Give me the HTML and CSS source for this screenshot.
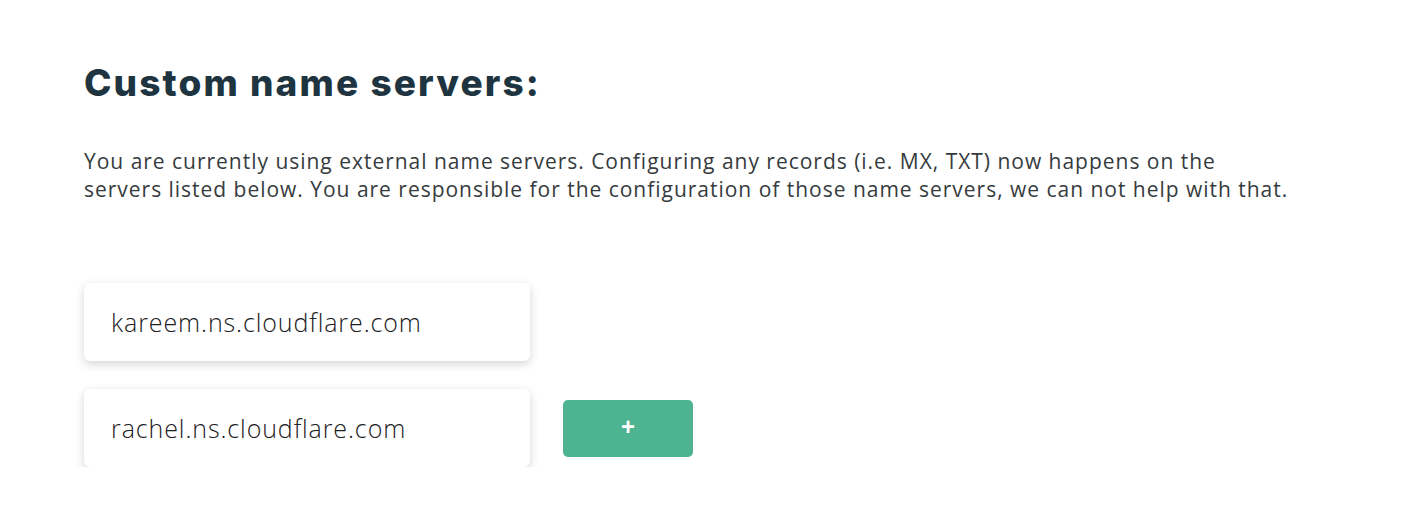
FILE: index.html
```html
<!DOCTYPE html>
<html lang="en">
<head>
<meta charset="utf-8">
<title>Custom name servers</title>
<link rel="stylesheet" href="styles.css">
</head>
<body>
<main class="page">
  <h1 class="title">Custom name servers:</h1>
  <p class="intro">You are currently using external name servers. Configuring any records (i.e. MX, TXT) now happens on the<br>servers listed below. You are responsible for the configuration of those name servers, we can not help with that.</p>
  <div class="servers">
    <div class="row">
      <div class="field">kareem.ns.cloudflare.com</div>
    </div>
    <div class="row">
      <div class="field">rachel.ns.cloudflare.com</div>
      <button class="add" type="button">+</button>
    </div>
  </div>
</main>
</body>
</html>
```
FILE: styles.css
```css
html, body {
  margin: 0;
  padding: 0;
  background: #ffffff;
}

.page {
  padding: 58px 0 0 84px;
}

.title {
  margin: 0;
  font-family: "Inter", "Liberation Sans", sans-serif;
  font-weight: 800;
  font-size: 37px;
  line-height: 50px;
  color: #1e3440;
  letter-spacing: 2.1px;
}

.intro {
  margin: 39px 0 0 0;
  font-family: "Open Sans", "Liberation Sans", sans-serif;
  font-weight: 400;
  font-size: 21px;
  line-height: 28px;
  color: #363b3e;
  letter-spacing: 0.98px;
  white-space: nowrap;
}

.servers {
  margin-top: 80px;
  display: flex;
  flex-direction: column;
  gap: 28px;
}

.row {
  display: flex;
  align-items: center;
  gap: 33px;
}

.field {
  box-sizing: border-box;
  width: 446px;
  height: 78px;
  padding: 0 0 0 27px;
  display: flex;
  align-items: center;
  background: #ffffff;
  border-radius: 6px;
  box-shadow: 0 3px 10px rgba(0, 0, 0, 0.17);
  font-family: "Open Sans", "Liberation Sans", sans-serif;
  font-weight: 300;
  font-size: 25px;
  letter-spacing: 0.9px;
  color: #1c2022;
}

.add {
  width: 130px;
  height: 57px;
  border: none;
  border-radius: 5px;
  background: #4db391;
  color: #ffffff;
  font-family: "Liberation Sans", sans-serif;
  font-size: 24px;
  font-weight: 700;
  line-height: 1;
  padding: 0 0 2px 0;
  cursor: pointer;
}
```
